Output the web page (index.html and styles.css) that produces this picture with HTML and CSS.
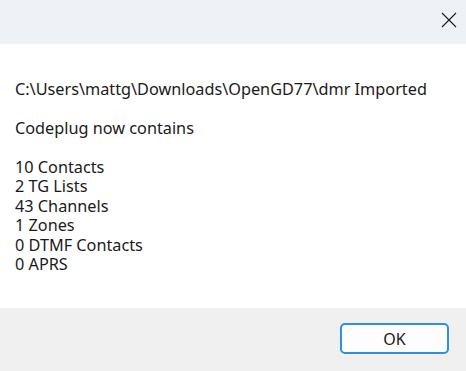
FILE: index.html
```html
<!DOCTYPE html>
<html>
<head>
<meta charset="utf-8">
<link rel="stylesheet" href="styles.css">
</head>
<body>
<div class="dialog">
  <div class="titlebar">
    <button class="close" aria-label="Close">
      <svg width="16" height="16" viewBox="0 0 16 16"><path d="M1 1 L15 15 M15 1 L1 15" stroke="#1a1a1a" stroke-width="1.1" fill="none"/></svg>
    </button>
  </div>
  <div class="content">
    <p class="msg">C:\Users\mattg\Downloads\OpenGD77\dmr Imported</p>
    <p class="msg">Codeplug now contains</p>
    <p class="msg">10 Contacts<br>2 TG Lists<br>43 Channels<br>1 Zones<br>0 DTMF Contacts<br>0 APRS</p>
  </div>
  <div class="footer">
    <button class="ok">OK</button>
  </div>
</div>
</body>
</html>
```

FILE: styles.css
```css
html, body {
  margin: 0;
  padding: 0;
  width: 466px;
  height: 371px;
  overflow: hidden;
  background: #ffffff;
}
.dialog {
  display: flex;
  flex-direction: column;
  width: 466px;
  height: 371px;
  font-family: "Noto Sans", "Open Sans", sans-serif;
  color: #1a1a1a;
}
.titlebar {
  height: 44px;
  background: #eef2f7;
  display: flex;
  justify-content: flex-end;
  align-items: flex-start;
}
.close {
  width: 34px;
  height: 40px;
  margin-right: 0;
  border: none;
  background: transparent;
  display: flex;
  align-items: center;
  justify-content: center;
  padding: 0;
}
.content {
  flex: 1;
  padding: 35.5px 15px 0 15px;
  background: #ffffff;
}
.msg {
  margin: 0 0 19.5px 0;
  font-size: 16.25px;
  line-height: 19.5px;
}
.footer {
  height: 63px;
  background: #f0f0f0;
  display: flex;
  justify-content: flex-end;
  align-items: flex-start;
  padding: 15px 17px 0 0;
  box-sizing: border-box;
}
.ok {
  width: 109px;
  height: 31px;
  border: 2px solid #2f8fe0;
  border-radius: 5px;
  background: #fdfdfd;
  font-family: "Noto Sans", "Open Sans", sans-serif;
  font-size: 16px;
  color: #1a1a1a;
  padding: 0;
}
```
